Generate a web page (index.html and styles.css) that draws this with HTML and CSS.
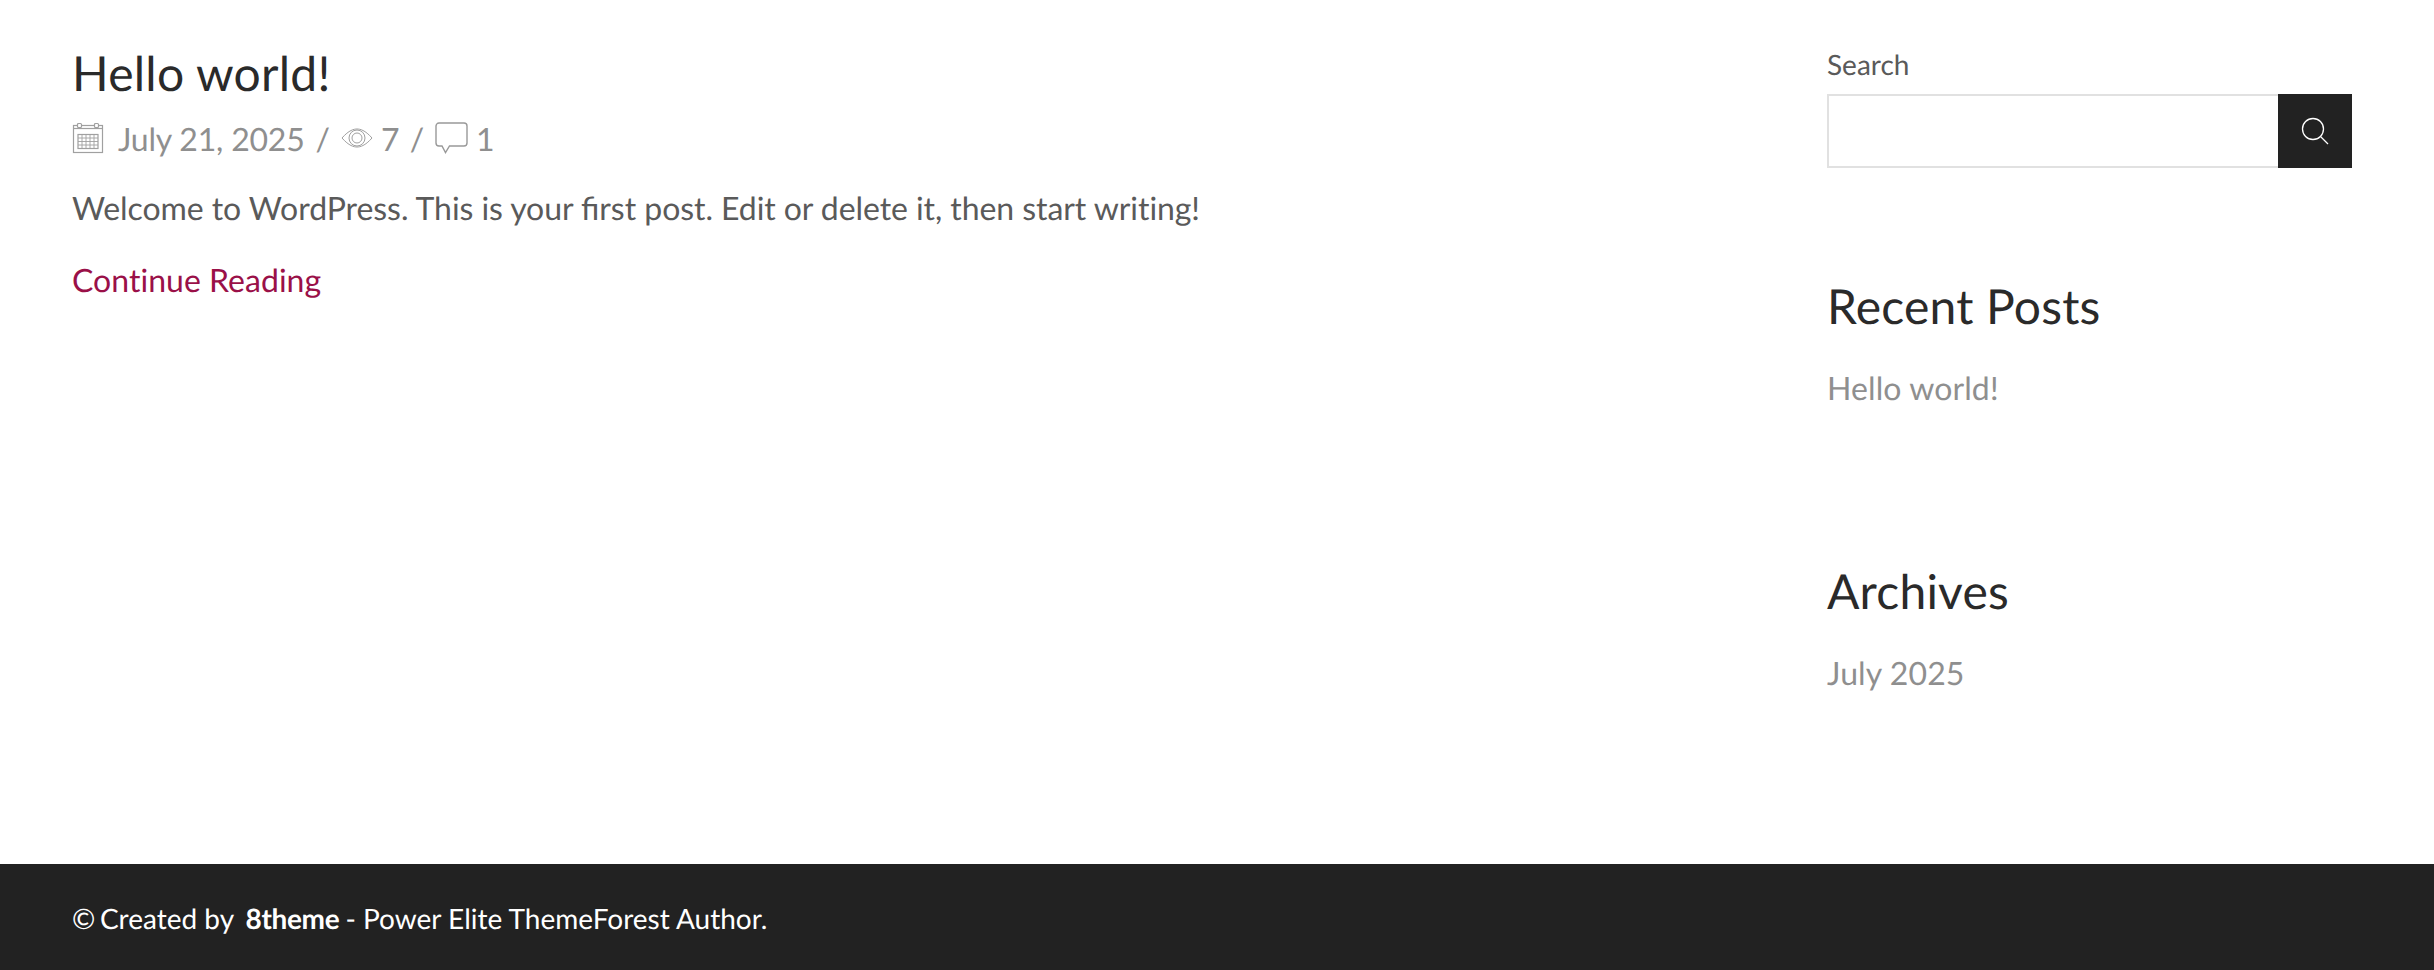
FILE: index.html
```html
<!DOCTYPE html>
<html lang="en">
<head>
<meta charset="utf-8">
<title>Hello world!</title>
<link rel="stylesheet" href="styles.css">
</head>
<body>
<div class="page">
  <main class="content">
    <h1 class="post-title">Hello world!</h1>
    <div class="meta">
      <svg class="icon-cal" width="32" height="32" viewBox="0 0 32 32" fill="none" stroke="#a0a0a0" stroke-width="1.2"><rect x="1.5" y="3.5" width="29" height="27"/><line x1="1.5" y1="6.5" x2="30.5" y2="6.5"/><rect x="5.5" y="1.5" width="4" height="4" rx="1" fill="#fff"/><rect x="22.5" y="1.5" width="4" height="4" rx="1" fill="#fff"/><rect x="6" y="12.5" width="20" height="14"/><path stroke-width="0.9" d="M10 12.5v14M14 12.5v14M18 12.5v14M22 12.5v14M6 16h20M6 19.5h20M6 23h20"/></svg>
      <span class="date">July 21, 2025</span>
      <span class="sep">/</span>
      <svg class="icon-eye" width="32" height="20" viewBox="0 0 32 20" fill="none" stroke="#a0a0a0" stroke-width="1"><path d="M1 10C8 2 13 1 16 1s8 1 15 9c-7 8-12 9-15 9S8 18 1 10z"/><circle cx="16" cy="10" r="8"/><circle cx="16" cy="10" r="5"/></svg>
      <span class="count">7</span>
      <span class="sep">/</span>
      <svg class="icon-chat" width="33" height="32" viewBox="0 0 33 32" fill="none" stroke="#999" stroke-width="1.4"><path d="M4 1h25a3 3 0 0 1 3 3v17a3 3 0 0 1-3 3H14.5l-4 6.5-3.5-6.5H4a3 3 0 0 1-3-3V4a3 3 0 0 1 3-3z"/></svg>
      <span class="count">1</span>
    </div>
    <p class="excerpt">Welcome to WordPress. This is your <span class="lig">first</span> post. Edit or delete it, then start writing!</p>
    <a class="more" href="#">Continue Reading</a>
  </main>
  <aside class="sidebar">
    <section class="search-widget">
      <label class="search-label" for="s">Search</label>
      <form class="search-form">
        <input class="search-input" id="s" type="text">
        <button class="search-btn" type="button" aria-label="Search"><svg width="28" height="28" viewBox="0 0 28 28" fill="none" stroke="#fff" stroke-width="1.3"><circle cx="12" cy="12" r="10.5"/><line x1="19.5" y1="19.5" x2="27" y2="27"/></svg></button>
      </form>
    </section>
    <section class="widget recent">
      <h2 class="widget-title">Recent Posts</h2>
      <a class="widget-link" href="#">Hello world!</a>
    </section>
    <section class="widget archives">
      <h2 class="widget-title">Archives</h2>
      <a class="widget-link" href="#">July 2025</a>
    </section>
  </aside>
</div>
<footer class="footer"><span class="copy">©</span> Created by <strong class="brand">8theme</strong> - Power Elite ThemeForest Author.</footer>
</body>
</html>
```
FILE: styles.css
```css
* { box-sizing: border-box; }
html, body { margin: 0; padding: 0; }
body { font-family: Lato, "Liberation Sans", sans-serif; background: #fff; color: #555; height: 970px; overflow: hidden; display: flex; flex-direction: column; text-rendering: geometricPrecision; font-variant-ligatures: none; }
.page { flex: 1; display: flex; justify-content: space-between; padding: 44px 82px 0 72px; }
.content { width: 1300px; }
.post-title { margin: 0; font-size: 48px; font-weight: 400; line-height: 60px; color: #2a2a2a; letter-spacing: 0.25px; }
.meta { display: flex; align-items: center; margin-top: 14px; height: 40px; font-size: 32px; color: #8f8f8f; }
.icon-cal { margin-right: 14px; }
.date { margin-right: 11px; letter-spacing: -0.2px; }
.sep { margin-right: 11px; }
.icon-eye { margin-right: 8px; }
.count { margin-right: 10px; }
.icon-chat { margin-right: 8px; }
.excerpt { margin: 30px 0 0; font-size: 32px; line-height: 40px; color: #5a5a5a; letter-spacing: -0.07px; }
.lig { font-variant-ligatures: common-ligatures; letter-spacing: 0; }
.more { display: block; margin-top: 32px; font-size: 32px; line-height: 40px; color: #9a1048; text-decoration: none; letter-spacing: 0.03px; }
.sidebar { width: 525px; }
.search-label { display: block; margin-top: 3px; font-size: 28px; line-height: 34px; color: #5a5a5a; }
.search-form { display: flex; margin-top: 13px; height: 74px; }
.search-input { flex: 1; min-width: 0; border: 2px solid #e1e1e1; border-right: 0; background: #fff; }
.search-btn { width: 74px; border: 0; padding: 0; background: #222; display: flex; align-items: center; justify-content: center; }
.widget-title { margin: 0; font-size: 48px; font-weight: 400; line-height: 60px; color: #2a2a2a; letter-spacing: 0.2px; }
.recent { margin-top: 109px; }
.archives { margin-top: 154px; }
.widget-link { display: block; margin-top: 31px; font-size: 32px; line-height: 40px; color: #8f8f8f; text-decoration: none; letter-spacing: 0.1px; }
.footer { height: 106px; flex: none; background: #222; color: #fff; font-size: 28px; padding: 35px 72px 0; line-height: 38px; }
.copy { letter-spacing: -2.5px; }
.brand { font-weight: 700; margin-left: 5px; margin-right: -1px; letter-spacing: -0.35px; }
```
